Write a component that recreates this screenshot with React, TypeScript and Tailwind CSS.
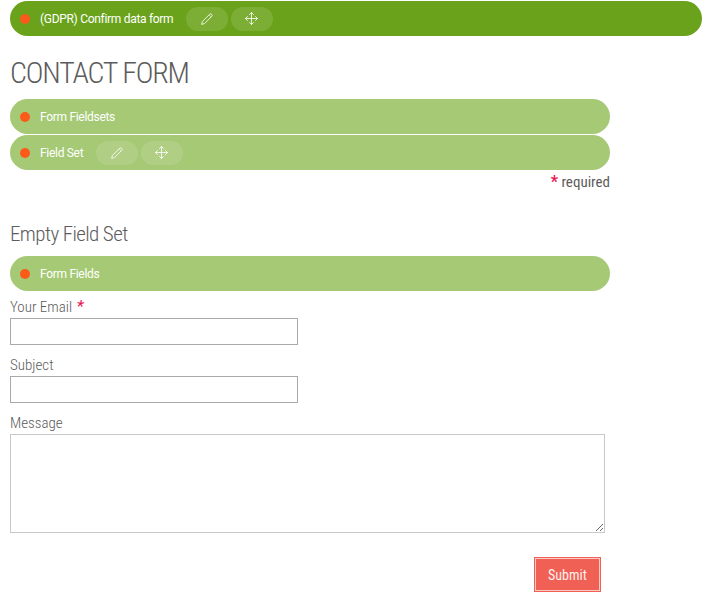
import React from "react";

function Pencil() {
  return (
    <svg width="12" height="12" viewBox="0 0 12 12" fill="none" stroke="currentColor" strokeWidth="0.8" strokeLinejoin="round">
      <path d="M.6 11.4 1.4 8.5 8.7 1.2Q9.7.3 10.7 1.3T10.8 3.3L3.5 10.6Z" />
      <path strokeWidth="0.5" d="M8 2 10 4" />
    </svg>
  );
}

function Move() {
  return (
    <svg width="13" height="13" viewBox="0 0 13 13" fill="none" stroke="currentColor" strokeWidth="0.8" strokeLinecap="round" strokeLinejoin="round">
      <path d="M6.5 .5V12.5M.5 6.5H12.5M4.5 2.5 6.5 .5 8.5 2.5M4.5 10.5 6.5 12.5 8.5 10.5M2.5 4.5 .5 6.5 2.5 8.5M10.5 4.5 12.5 6.5 10.5 8.5" />
    </svg>
  );
}

function Bar({ label, tools, dark }: { label: string; tools?: boolean; dark?: boolean }) {
  return (
    <div className={`flex h-[35px] shrink-0 items-center rounded-full pl-[10px] font-[Roboto,sans-serif] text-[12px] font-normal text-white [font-stretch:100%] ${dark ? "w-[692px] bg-[#6aa31b]" : "w-[600px] bg-[#a5c975]"}`}>
      <span className="mr-[10px] size-[10px] rounded-full bg-[#fc5a1b]" />
      <span className="tracking-[-0.3px] whitespace-nowrap">{label}</span>
      {tools && (
        <span className="ml-[12.6px] flex gap-[3px]">
          <button aria-label="Edit" className="flex h-6 w-[42px] items-center justify-center rounded-full bg-white/12"><Pencil /></button>
          <button aria-label="Move" className="flex h-6 w-[42px] items-center justify-center rounded-full bg-white/12"><Move /></button>
        </span>
      )}
    </div>
  );
}

export default function App() {
  return (
    <div className="flex h-[593px] w-[711px] flex-col items-start overflow-hidden bg-white pl-[10px] pt-px font-['Roboto_Condensed',Roboto,sans-serif] text-[15px] font-light text-[#5c5c5c] [font-stretch:75%]">
      <Bar dark tools label="(GDPR) Confirm data form" />
      <h1 className="flex h-[63px] items-center pt-[9px] text-[30px] font-light tracking-[-1.2px] whitespace-nowrap">CONTACT FORM</h1>
      <div className="flex flex-col gap-px">
        <Bar label="Form Fieldsets" />
        <Bar tools label="Field Set" />
      </div>
      <p className="h-6 w-[600px] text-right leading-6 font-normal"><b className="text-[16px] leading-none text-[#ed1651]">*</b> required</p>
      <h2 className="mt-6 h-[38px] text-[21px] leading-8 font-light tracking-[-0.6px] whitespace-nowrap">Empty Field Set</h2>
      <Bar label="Form Fields" />
      <form className="flex flex-col items-start">
        <label className="h-[27px] leading-8">Your Email <b className="ml-px text-[17px] leading-none text-[#ed1651] italic">*</b></label>
        <input className="h-[27px] w-[288px] border border-[#a9a9a9]" />
        <label className="mt-1 h-[27px] leading-8">Subject</label>
        <input className="h-[27px] w-[288px] border border-[#a9a9a9]" />
        <label className="mt-1 h-[27px] leading-8">Message</label>
        <textarea className="h-[99px] w-[595px] border border-[#c8c8c8]" />
        <button type="button" className="mt-6 ml-[524px] h-[35px] w-[67px] bg-[#f06055] p-px text-[14px] font-normal text-[#fff0ee]">
          <span className="flex h-full items-center justify-center border border-[#f9cbc6] pt-px">Submit</span>
        </button>
      </form>
    </div>
  );
}
